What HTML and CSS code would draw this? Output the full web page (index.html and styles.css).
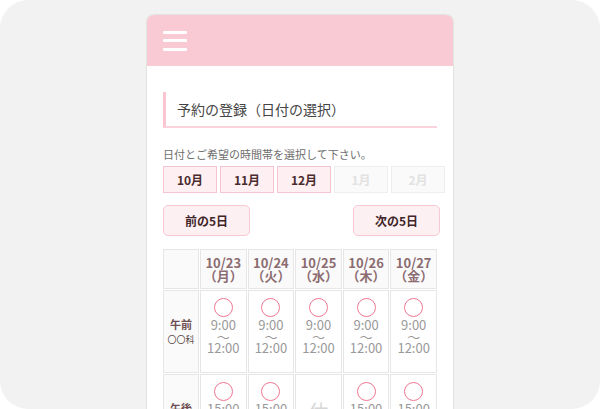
FILE: index.html
```html
<!DOCTYPE html>
<html lang="ja">
<head>
<meta charset="utf-8">
<title>予約の登録</title>
<link rel="stylesheet" href="styles.css">
</head>
<body>
<div class="frame">
  <div class="card">
    <header class="topbar">
      <div class="burger"><span></span><span></span><span></span></div>
    </header>
    <main class="content">
      <h1 class="heading">予約の登録（日付の選択）</h1>
      <p class="lead">日付とご希望の時間帯を選択して下さい。</p>
      <div class="tabs">
        <div class="tab">10月</div>
        <div class="tab">11月</div>
        <div class="tab">12月</div>
        <div class="tab off">1月</div>
        <div class="tab off">2月</div>
      </div>
      <div class="pager">
        <div class="btn">前の5日</div>
        <div class="btn">次の5日</div>
      </div>
      <div class="grid">
        <div class="cell corner"></div>
        <div class="cell head">10/23<br>（月）</div>
        <div class="cell head">10/24<br>（火）</div>
        <div class="cell head">10/25<br>（水）</div>
        <div class="cell head">10/26<br>（木）</div>
        <div class="cell head">10/27<br>（金）</div>

        <div class="cell label"><b>午前</b><small>〇〇科</small></div>
        <div class="cell slot"><span class="ok"></span><span class="t">9:00<br>～<br>12:00</span></div>
        <div class="cell slot"><span class="ok"></span><span class="t">9:00<br>～<br>12:00</span></div>
        <div class="cell slot"><span class="ok"></span><span class="t">9:00<br>～<br>12:00</span></div>
        <div class="cell slot"><span class="ok"></span><span class="t">9:00<br>～<br>12:00</span></div>
        <div class="cell slot"><span class="ok"></span><span class="t">9:00<br>～<br>12:00</span></div>

        <div class="cell label"><b>午後</b><small>〇〇科</small></div>
        <div class="cell slot"><span class="ok"></span><span class="t">15:00<br>～<br>18:00</span></div>
        <div class="cell slot"><span class="ok"></span><span class="t">15:00<br>～<br>18:00</span></div>
        <div class="cell slot closed">休</div>
        <div class="cell slot"><span class="ok"></span><span class="t">15:00<br>～<br>18:00</span></div>
        <div class="cell slot"><span class="ok"></span><span class="t">15:00<br>～<br>18:00</span></div>
      </div>
    </main>
  </div>
</div>
</body>
</html>
```
FILE: styles.css
```css
html, body {
  margin: 0;
  padding: 0;
  background: #ffffff;
}
body {
  font-family: "Noto Sans CJK JP", "Noto Sans", sans-serif;
  width: 600px;
  height: 409px;
  overflow: hidden;
}
.frame {
  width: 600px;
  height: 409px;
  background: #f2f2f2;
  border-radius: 28px;
  overflow: hidden;
  padding-top: 14px;
  box-sizing: border-box;
}
.card {
  margin-left: 146px;
  width: 308px;
  height: 420px;
  box-sizing: border-box;
  background: #ffffff;
  border: 1px solid #e3e3e3;
  border-bottom: none;
  border-radius: 8px 8px 0 0;
  overflow: hidden;
}
.topbar {
  height: 51px;
  background: #f9c9d4;
  display: flex;
  align-items: center;
  padding-left: 16px;
}
.burger {
  display: flex;
  flex-direction: column;
  gap: 5.5px;
}
.burger span {
  display: block;
  width: 24px;
  height: 3px;
  background: #ffffff;
  border-radius: 1px;
}
.content {
  padding: 0 16px;
}
.heading {
  margin: 26px 0 0 0;
  height: 34px;
  border-left: 3px solid #f9c6d2;
  border-bottom: 2px solid #fbd3dc;
  padding-left: 11px;
  font-size: 14px;
  font-weight: normal;
  color: #444444;
  line-height: 34px;
}
.lead {
  margin: 19px 0 0 0;
  font-size: 11px;
  line-height: 14px;
  color: #6e6e6e;
}
.tabs {
  display: flex;
  gap: 3px;
  margin-top: 5px;
}
.tab {
  flex: 0 0 54px;
  height: 27px;
  box-sizing: border-box;
  border: 1px solid #f6c4d0;
  background: #fdeff2;
  color: #4a2a2c;
  font-weight: bold;
  font-size: 12px;
  display: flex;
  align-items: center;
  justify-content: center;
}
.tab.off {
  border-color: #eeeeee;
  background: #fafafa;
  color: #e2e2e2;
}
.pager {
  display: flex;
  justify-content: space-between;
  width: 277px;
  margin-top: 12px;
}
.btn {
  width: 87px;
  height: 31px;
  box-sizing: border-box;
  border: 1px solid #f8c8d4;
  border-radius: 5px;
  background: #fdf0f3;
  color: #3f2527;
  font-weight: bold;
  font-size: 12px;
  display: flex;
  align-items: center;
  justify-content: center;
}
.grid {
  margin-top: 13px;
  width: 274px;
  display: grid;
  grid-template-columns: 36px repeat(5, 1fr);
  grid-template-rows: 40px 83px 83px;
  gap: 1px;
}
.cell {
  box-sizing: border-box;
  border: 1px solid #e6e6e6;
  background: #ffffff;
}
.corner {
  background: #fafafa;
}
.head {
  background: #fafafa;
  color: #8c6c70;
  font-weight: bold;
  font-size: 13px;
  line-height: 13px;
  text-align: center;
  display: flex;
  align-items: center;
  justify-content: center;
}
.label {
  background: #fafafa;
  display: flex;
  flex-direction: column;
  align-items: center;
  justify-content: center;
  color: #6e4e50;
}
.label b {
  font-size: 11px;
  line-height: 14px;
}
.label small {
  font-size: 9px;
  line-height: 14px;
  margin-top: 2px;
  color: #5a4a4b;
}
.slot {
  display: flex;
  flex-direction: column;
  align-items: center;
  padding-top: 7px;
  text-align: center;
}
.ok {
  display: block;
  width: 19px;
  height: 19px;
  box-sizing: border-box;
  border: 1.5px solid #ef7692;
  border-radius: 50%;
}
.t {
  display: block;
  margin-top: 2px;
  font-size: 13px;
  line-height: 11.5px;
  color: #999999;
}
.closed {
  padding-top: 27px;
  font-size: 20px;
  line-height: 20px;
  color: #d6d6d6;
}
```
